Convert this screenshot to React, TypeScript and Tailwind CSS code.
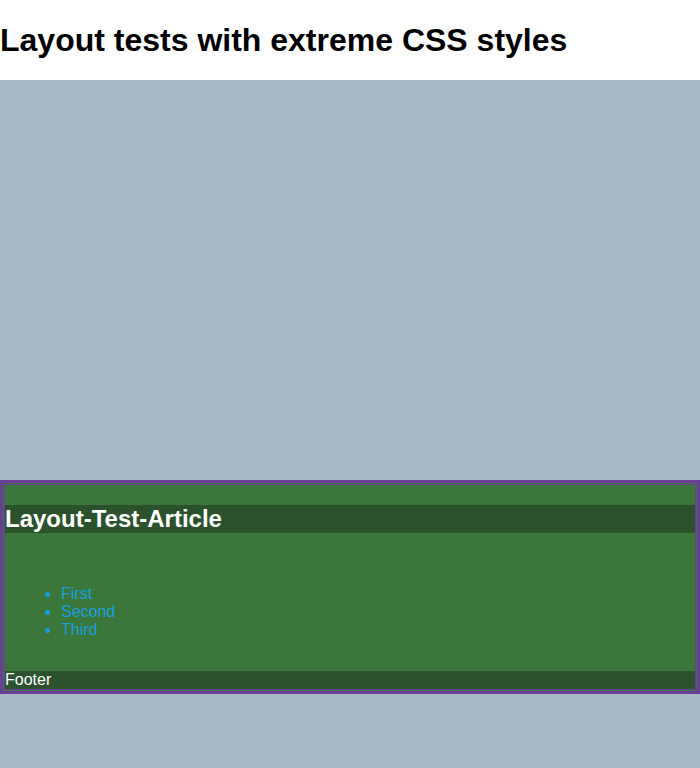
export default function App() {
  return (
    <div className="min-h-[768px] bg-[#aab7c7] font-['Liberation_Sans',Arial,sans-serif]">
      <header className="bg-white h-[80px] flex items-center">
        <h1 className="text-[32px] leading-[37px] font-bold text-black">
          Layout tests with extreme CSS styles
        </h1>
      </header>
      <div className="h-[400px]" />
      <article className="border-[3px] border-[#6a3d9a] bg-[#3b763b] p-px">
        <div className="border border-[#6a3d9a] bg-[#3b763b]">
          <h2 className="mt-[20px] bg-[#2c512d] text-white text-[24px] leading-[28px] font-bold">
            Layout-Test-Article
          </h2>
          <ul className="mt-[52px] list-disc pl-[56px] text-[16px] leading-[18px] text-[#1aa0dc]">
            <li>First</li>
            <li>Second</li>
            <li>Third</li>
          </ul>
          <footer className="mt-[32px] bg-[#2c512d] text-white text-[16px] leading-[18px]">
            Footer
          </footer>
        </div>
      </article>
    </div>
  );
}
